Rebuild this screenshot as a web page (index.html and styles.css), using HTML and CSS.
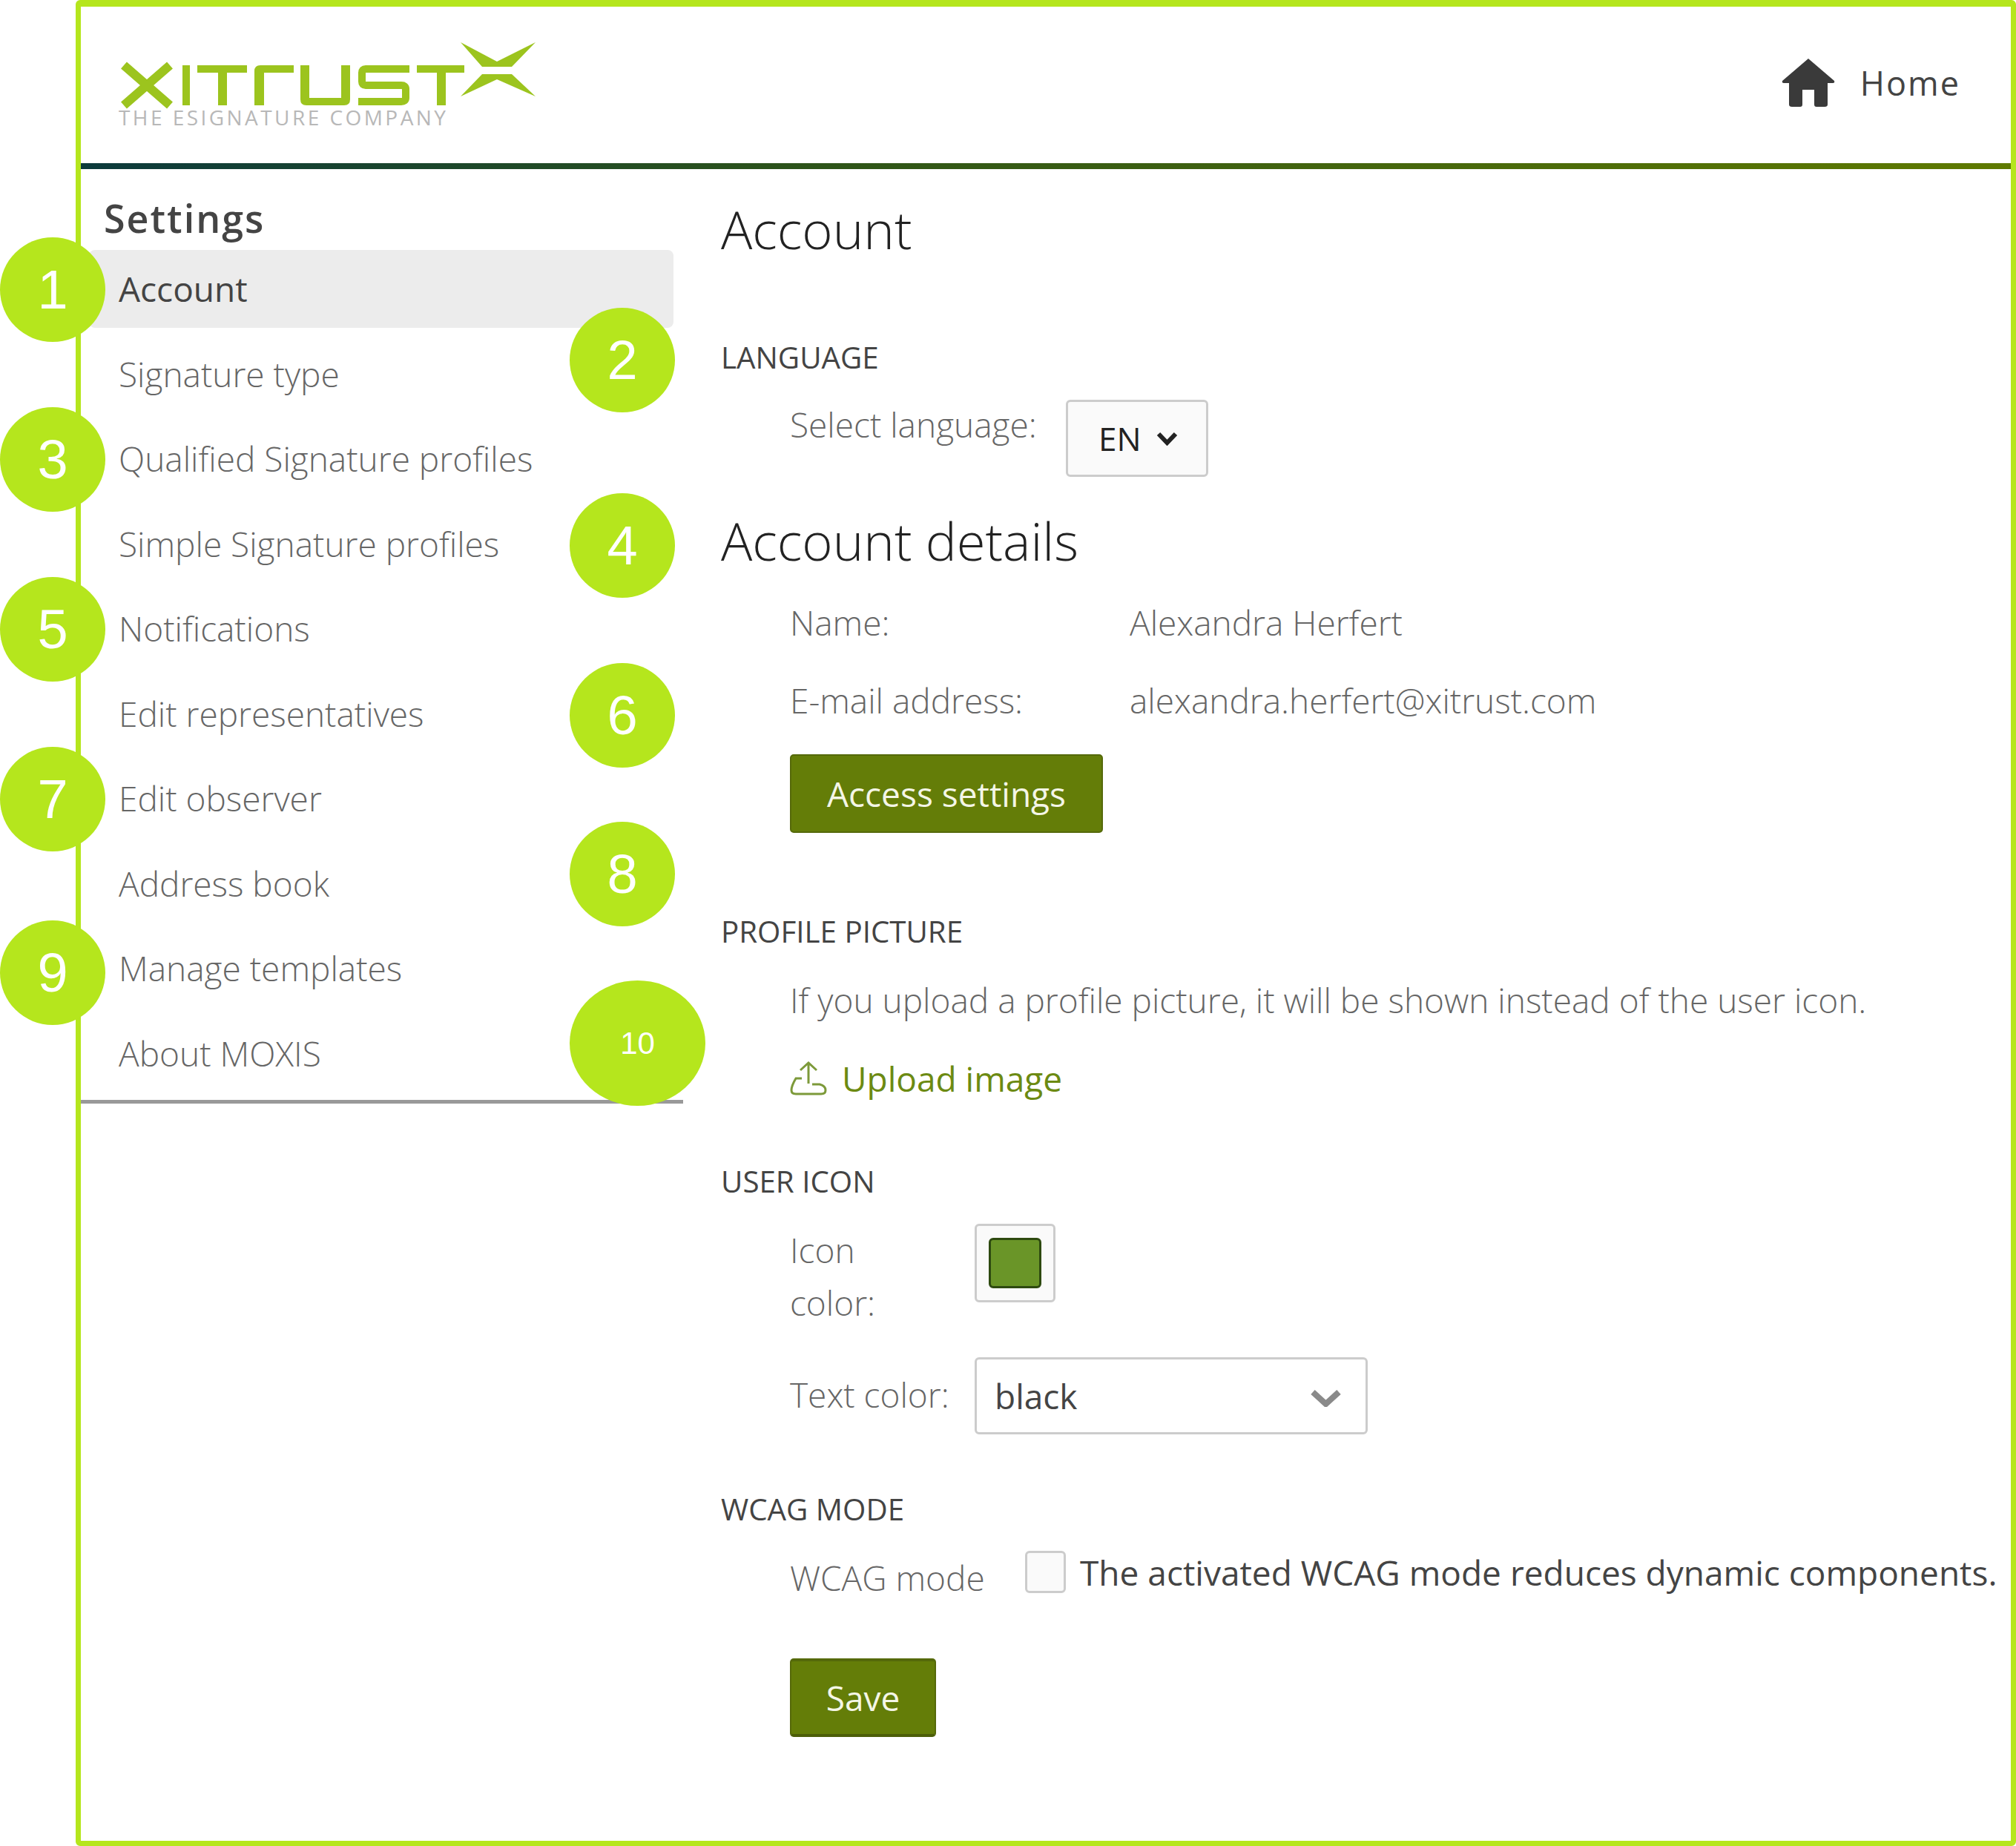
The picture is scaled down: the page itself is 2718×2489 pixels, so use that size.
FILE: index.html
```html
<!DOCTYPE html>
<html lang="en">
<head>
    <meta charset="UTF-8">
    <title>Settings - Account</title>
    <link rel="stylesheet" href="styles.css">
</head>
<body>
    <div class="frame">
        <header class="topbar">
            <svg class="logo" viewBox="155 50 570 125" width="570" height="125" role="img" aria-label="XiTrust logo">
                <g fill="none" stroke="#9cc41e" stroke-width="12">
                    <path d="M167 88 L229 142 M229 88 L167 142"/>
                </g>
                <g fill="#9cc41e">
                    <rect x="246" y="88" width="10" height="54"/>
                    <rect x="266" y="88" width="67" height="10"/>
                    <rect x="294" y="88" width="12" height="54"/>
                    <path d="M343 142 V96 Q343 88 351 88 H396 V98 H356 V142 Z"/>
                    <path d="M405 88 H417 V132 H460 V88 H472 V134 Q472 142 464 142 H413 Q405 142 405 134 Z"/>
                    <rect x="562" y="88" width="64" height="10"/>
                    <rect x="589" y="88" width="12" height="54"/>
                    <polygon points="621,57 670,83 722,57 690,90 650,90"/>
                    <polygon points="650,100 690,100 722,130 670,107 621,130"/>
                </g>
                <path d="M552 93 H493 Q488 93 488 98 V110 Q488 115 493 115 H541 Q547 115 547 120 V132 Q547 137 541 137 H483" fill="none" stroke="#9cc41e" stroke-width="10"/>
                <text class="logo-tag" x="160" y="169" textLength="441">THE ESIGNATURE COMPANY</text>
            </svg>
            <a class="home" href="#">
                <svg viewBox="0 0 72 66" width="72" height="66">
                    <path fill="#3a3a3a" d="M36 0 L71 30 Q72 33 69 33 L62 33 V62 Q62 65 58 65 H47 Q44 65 44 62 V42 H28 V62 Q28 65 25 65 H14 Q10 65 10 62 V33 H3 Q0 33 1 30 Z"/>
                </svg>
                <span>Home</span>
            </a>
        </header>

        <div class="layout">
            <aside class="sidebar">
                <div class="sidebar-title">Settings</div>
                <nav class="menu">
                    <a class="active" href="#">Account</a>
                    <a href="#">Signature type</a>
                    <a href="#">Qualified Signature profiles</a>
                    <a href="#">Simple Signature profiles</a>
                    <a href="#">Notifications</a>
                    <a href="#">Edit representatives</a>
                    <a href="#">Edit observer</a>
                    <a href="#">Address book</a>
                    <a href="#">Manage templates</a>
                    <a href="#">About MOXIS</a>
                </nav>
            </aside>

            <main class="content">
                <h1 class="page-title">Account</h1>

                <h3 class="section language-head">Language</h3>
                <div class="row language-row">
                    <span class="label language-label">Select language:</span>
                    <div class="lang-select">
                        <span>EN</span>
                        <svg viewBox="0 0 29 19" width="29" height="19"><path d="M3 3 L14.5 15 L26 3" fill="none" stroke="#222" stroke-width="6"/></svg>
                    </div>
                </div>

                <h1 class="page-title details-title">Account details</h1>
                <div class="row detail-row name-row"><span class="label detail-label">Name:</span><span class="label">Alexandra Herfert</span></div>
                <div class="row detail-row email-row"><span class="label detail-label">E-mail address:</span><span class="label">alexandra.herfert@xitrust.com</span></div>
                <button class="btn access-btn">Access settings</button>

                <h3 class="section profile-head">Profile picture</h3>
                <p class="label profile-text">If you upload a profile picture, it will be shown instead of the user icon.</p>
                <a class="upload" href="#">
                    <svg viewBox="0 0 50 46" width="50" height="46">
                        <path d="M25 2 V30 M14 12 L25 2 L36 12 M16 23 H8 Q2 33 2 39 Q2 44 8 44 H42 Q48 44 48 39 Q48 33 40 31 H30" fill="none" stroke="#7d9a3a" stroke-width="3"/>
                    </svg>
                    <span>Upload image</span>
                </a>

                <h3 class="section icon-head">User icon</h3>
                <div class="row icon-row">
                    <span class="label color-label">Icon<br>color:</span>
                    <div class="swatch-box"><div class="swatch"></div></div>
                </div>
                <div class="row text-color-row">
                    <span class="label color-label text-color-label">Text color:</span>
                    <div class="color-select">
                        <span>black</span>
                        <svg viewBox="0 0 43 24" width="43" height="24"><path d="M4 4 L21.5 20 L39 4" fill="none" stroke="#8a8a8a" stroke-width="8"/></svg>
                    </div>
                </div>

                <h3 class="section wcag-head">WCAG mode</h3>
                <div class="row wcag-row">
                    <span class="label wcag-label">WCAG mode</span>
                    <span class="checkbox"></span>
                    <span class="wcag-text">The activated WCAG mode reduces dynamic components.</span>
                </div>
                <button class="btn save-btn">Save</button>
            </main>
        </div>
    </div>

    <div class="marker m1">1</div>
    <div class="marker m2">2</div>
    <div class="marker m3">3</div>
    <div class="marker m4">4</div>
    <div class="marker m5">5</div>
    <div class="marker m6">6</div>
    <div class="marker m7">7</div>
    <div class="marker m8">8</div>
    <div class="marker m9">9</div>
    <div class="marker m10">10</div>
</body>
</html>
```

FILE: styles.css
```css
body {
    margin: 0;
    font-family: "Open Sans", sans-serif;
    background: #fff;
    color: #444;
}
.frame {
    box-sizing: border-box;
    height: 2489px;
    margin-left: 102px;
    border: 7px solid #b5e61d;
    border-top-width: 9px;
    border-radius: 6px;
}
.topbar {
    position: relative;
    box-sizing: border-box;
    height: 219px;
    display: flex;
    justify-content: space-between;
    padding: 41px 68px 0 46px;
    border-bottom: 8px solid;
    border-image: linear-gradient(to right, #0c3a3c, #2f5518 40%, #5f7a00) 1;
}
.logo-tag {
    font-family: "Open Sans", sans-serif;
    font-size: 28px;
    fill: #b8b8b8;
}
.home {
    display: flex;
    align-items: center;
    gap: 34px;
    height: 66px;
    margin-top: 29px;
    font-size: 45px;
    letter-spacing: 2px;
    color: #444;
    text-decoration: none;
}
.home span { margin-top: -2px; }
.layout {
    display: flex;
}
.sidebar {
    width: 812px;
    flex-shrink: 0;
}
.sidebar-title {
    margin: 32px 0 0 31px;
    height: 77px;
    line-height: 68px;
    font-size: 52px;
    font-weight: 600;
    letter-spacing: 2px;
    color: #444;
}
.menu {
    padding: 0 13px 0 11px;
    border-bottom: 5px solid #999;
    height: 1146px;
}
.menu a {
    display: block;
    height: 105px;
    margin-bottom: 9.5px;
    padding-left: 40px;
    line-height: 105px;
    font-size: 46px;
    font-weight: 300;
    color: #666;
    text-decoration: none;
    border-radius: 8px;
}
.menu a.active {
    background: #ececec;
    color: #444;
    font-weight: 400;
}
.content {
    margin-left: 51px;
}
.page-title {
    margin: 31px 0 0;
    line-height: 100px;
    font-size: 70.5px;
    font-weight: 300;
    color: #222;
}
.section {
    margin: 0;
    line-height: 50px;
    font-size: 40.3px;
    font-weight: 400;
    text-transform: uppercase;
    color: #444;
}
.row {
    display: flex;
    margin-left: 93px;
}
.label {
    line-height: 60px;
    font-size: 46px;
    font-weight: 300;
    color: #666;
}
.language-head { margin-top: 98px; }
.language-row { margin-top: 32px; }
.language-label { width: 372px; line-height: 66px; }
.lang-select {
    box-sizing: border-box;
    width: 192px;
    height: 104px;
    padding-left: 41px;
    display: flex;
    align-items: center;
    gap: 20px;
    background: #fafafa;
    border: 3px solid #ccc;
    border-radius: 6px;
    font-size: 44px;
    color: #222;
}
.details-title { margin-top: 36px; }
.detail-row { line-height: 60px; }
.name-row { margin-top: 30px; }
.email-row { margin-top: 45px; }
.detail-label { width: 458px; }
.btn {
    display: block;
    box-sizing: border-box;
    height: 106px;
    margin-left: 93px;
    background: #647d08;
    border: 2px solid #55690a;
    border-radius: 5px;
    font-family: "Open Sans", sans-serif;
    font-size: 46px;
    color: #f4f6e6;
}
.access-btn { width: 422px; margin-top: 43px; }
.profile-head { margin-top: 108px; }
.profile-text { margin: 37px 0 0 93px; }
.upload {
    display: flex;
    align-items: center;
    gap: 20px;
    height: 60px;
    margin: 46px 0 0 93px;
    font-size: 46px;
    color: #6c8a12;
    text-decoration: none;
}
.icon-head { margin-top: 84px; }
.icon-row { margin-top: 32px; }
.color-label { width: 249px; line-height: 71px; }
.text-color-label { line-height: 100px; }
.swatch-box {
    box-sizing: border-box;
    width: 109px;
    height: 106px;
    display: flex;
    align-items: center;
    justify-content: center;
    background: #fafafa;
    border: 3px solid #ccc;
    border-radius: 6px;
}
.swatch {
    box-sizing: border-box;
    width: 71px;
    height: 68px;
    background: #6a9528;
    border: 3px solid #2e4a10;
    border-radius: 6px;
}
.text-color-row { margin-top: 38px; }
.color-select {
    box-sizing: border-box;
    width: 530px;
    height: 104px;
    padding: 0 32px 0 24px;
    display: flex;
    align-items: center;
    justify-content: space-between;
    border: 3px solid #ccc;
    border-radius: 6px;
    font-size: 46px;
    color: #444;
}
.color-select svg { margin-top: 6px; }
.wcag-head { margin-top: 76px; }
.wcag-row { margin-top: 31px; height: 57px; }
.wcag-label { width: 317px; margin-top: 6px; }
.checkbox {
    box-sizing: border-box;
    width: 55px;
    height: 57px;
    background: #fafafa;
    border: 3px solid #ccc;
    border-radius: 6px;
}
.wcag-text {
    margin-left: 19px;
    line-height: 58px;
    font-size: 46px;
    white-space: nowrap;
    color: #444;
}
.save-btn { width: 197px; margin-top: 88px; border-top: 4px solid #55690a; border-bottom: 4px solid #4c5e08; }

/* numbered callouts on top of the screenshot */
.marker {
    position: absolute;
    width: 142px;
    height: 141px;
    display: flex;
    align-items: center;
    justify-content: center;
    border-radius: 50%;
    background: #b5e61d;
    font-family: "Liberation Sans", Arial, sans-serif;
    font-size: 74px;
    color: #fff;
}
.m1 { left: 0; top: 320px; }
.m2 { left: 768px; top: 415px; }
.m3 { left: 0; top: 549px; }
.m4 { left: 768px; top: 665px; }
.m5 { left: 0; top: 778px; }
.m6 { left: 768px; top: 894px; }
.m7 { left: 0; top: 1007px; }
.m8 { left: 768px; top: 1108px; }
.m9 { left: 0; top: 1241px; }
.m10 { left: 768px; top: 1322px; width: 183px; height: 169px; font-size: 42px; }
```
